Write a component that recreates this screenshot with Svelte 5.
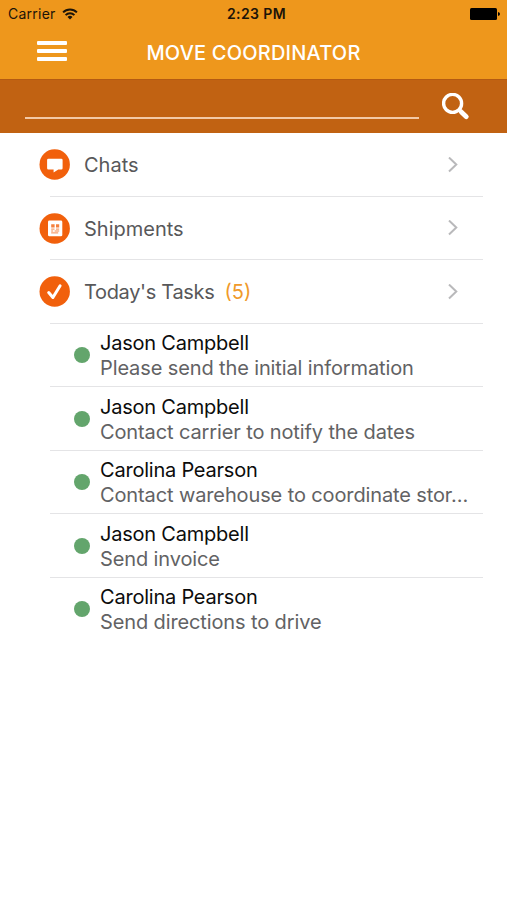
<script lang="ts">
  interface Task {
    name: string;
    note: string;
  }

  const menu = [
    { icon: "chat", label: "Chats", count: 0 },
    { icon: "shipment", label: "Shipments", count: 0 },
    { icon: "check", label: "Today's Tasks", count: 5 },
  ];

  const tasks: Task[] = [
    { name: "Jason Campbell", note: "Please send the initial information" },
    { name: "Jason Campbell", note: "Contact carrier to notify the dates" },
    { name: "Carolina Pearson", note: "Contact warehouse to coordinate stor…" },
    { name: "Jason Campbell", note: "Send invoice" },
    { name: "Carolina Pearson", note: "Send directions to drive" },
  ];

  let query = $state("");
</script>

<div class="screen">
  <header class="top">
    <div class="status">
      <span class="carrier">
        Carrier
        <svg width="16" height="12" viewBox="0 0 16 12" fill="none" stroke="#1c1408" stroke-width="2">
          <path d="M1.1 4.4a9.8 9.8 0 0 1 13.8 0M3.6 7.1a6.2 6.2 0 0 1 8.8 0" />
          <path d="M8 11.6 5.5 8.9a3.6 3.6 0 0 1 5 0z" fill="#1c1408" stroke="none" />
        </svg>
      </span>
      <span class="time">2:23 PM</span>
      <svg class="battery" width="30" height="12" viewBox="0 0 30 12">
        <rect width="27" height="12" rx="1.5" />
        <path d="M28 4q2 .5 2 2t-2 2z" />
      </svg>
    </div>
    <div class="nav">
      <button class="burger" aria-label="Menu">
        <span></span>
        <span></span>
        <span></span>
      </button>
      <h1>MOVE COORDINATOR</h1>
    </div>
  </header>

  <div class="search">
    <input type="text" aria-label="Search" bind:value={query} />
    <svg width="28" height="28" viewBox="0 0 28 28" fill="none" stroke="#fff">
      <circle cx="10.6" cy="10.4" r="9" stroke-width="3.4" />
      <path d="m17 16.8 2 2" stroke-width="3.6" />
      <path d="m19.3 18.9 5 4.8" stroke-width="4.8" stroke-linecap="round" />
    </svg>
  </div>

  <ul class="menu">
    {#each menu as item}
      <li>
        <svg class="icon" width="31" height="31" viewBox="0 0 31 31">
          <circle cx="15.7" cy="15.5" r="15.2" fill="#f1600c" />
          {#if item.icon === "chat"}
            <path
              d="M9.4 9.8h12.9q1.3 0 1.3 1.3v8.2q0 1.3-1.3 1.3h-3L14.6 23.4v-2.8H9.4q-1.3 0-1.3-1.3v-8.2q0-1.3 1.3-1.3z"
              fill="#fff"
            />
          {:else if item.icon === "shipment"}
            <rect x="9" y="7.5" width="14.3" height="15.8" rx="1.4" fill="#fff" />
            <path d="M12.2 11.2h3.4v3.2h-3.4zM17 11.2h3.2v3.2H17z" fill="#f1600c" opacity=".8" />
            <path
              d="M12.2 16.1h3.3M17 16.1h3.2M12.2 18h2M15.6 18h4.6M12.2 19.9h7"
              fill="none"
              stroke="#f1600c"
              opacity=".75"
            />
          {:else}
            <path
              d="m9.7 16.6 4.2 4.9 7.2-11.7"
              fill="none"
              stroke="#fff"
              stroke-width="3"
              stroke-linecap="round"
              stroke-linejoin="round"
            />
          {/if}
        </svg>
        <span class="label" class:label--counted={item.count > 0}>{item.label}</span>
        {#if item.count}
          <span class="count">({item.count})</span>
        {/if}
        <svg class="chevron" width="10" height="16" viewBox="0 0 10 16">
          <path d="m1 .5 7.3 7L1 14.5" fill="none" stroke="#b9b9bb" stroke-width="2" />
        </svg>
      </li>
    {/each}
  </ul>

  <ul class="tasks">
    {#each tasks as task}
      <li>
        <span class="dot"></span>
        <div class="text">
          <div class="name">{task.name}</div>
          <div class="note">{task.note}</div>
        </div>
      </li>
    {/each}
  </ul>
</div>

<style>
  :global(body) {
    margin: 0;
    background: #fff;
  }

  .screen {
    width: 507px;
    height: 900px;
    overflow: hidden;
    background: #fff;
    font-family: Inter, "Liberation Sans", sans-serif;
  }

  .top {
    height: 79px;
    background: #ee971c;
  }

  .status {
    display: grid;
    grid-template-columns: 1fr auto 1fr;
    align-items: center;
    height: 27px;
    padding: 0 7px 0 8px;
    font-size: 14px;
    color: #1c1408;
  }

  .carrier {
    display: flex;
    align-items: center;
    gap: 6px;
    letter-spacing: 0.25px;
  }

  .time {
    padding-left: 5px;
    font-weight: 600;
    letter-spacing: 0.4px;
  }

  .battery {
    justify-self: end;
  }

  .nav {
    display: grid;
    grid-template-columns: 110px 1fr 110px;
    align-items: center;
    height: 50px;
  }

  .burger {
    display: flex;
    flex-direction: column;
    gap: 4px;
    width: 30px;
    margin: 0 0 3px 37px;
    padding: 0;
    border: none;
    background: none;
  }

  .burger span {
    height: 4px;
    border-radius: 1px;
    background: #fff;
  }

  h1 {
    margin: 0;
    padding-top: 1px;
    font-size: 20px;
    font-weight: 500;
    line-height: 24px;
    letter-spacing: 0.2px;
    text-align: center;
    white-space: nowrap;
    color: #fff;
  }

  .search {
    display: flex;
    align-items: flex-start;
    box-sizing: border-box;
    height: 53.5px;
    padding: 13px 37px 0 25px;
    border-top: 1px solid #b45a12;
    background: #c16212;
  }

  .search input {
    box-sizing: border-box;
    width: 394px;
    height: 26px;
    margin-right: 23px;
    padding: 0;
    border: none;
    border-bottom: 2px solid #f3c9a6;
    background: transparent;
    font: inherit;
    color: #fff;
    outline: none;
  }

  .search svg {
    flex: none;
  }

  ul {
    margin: 0;
    padding: 0;
    list-style: none;
  }

  .menu {
    padding-top: 0.5px;
  }

  li {
    display: flex;
    align-items: center;
    box-sizing: border-box;
    height: 63.5px;
    background: linear-gradient(#e4e4e6, #e4e4e6) 50px 100% / 433px 1px no-repeat;
  }

  .menu li {
    padding: 0 49px 0 39px;
    font-size: 20px;
    color: #58585a;
  }

  .label {
    margin-left: 14px;
    padding-top: 1px;
  }

  .label--counted {
    letter-spacing: -0.33px;
  }

  .count {
    margin-left: 10px;
    padding-top: 1px;
    color: #f09a2a;
  }

  .chevron {
    margin-left: auto;
  }

  .tasks li {
    padding: 0 35px 0 74px;
  }

  .tasks li:last-child {
    background: none;
  }

  .dot {
    flex: none;
    width: 16px;
    height: 16px;
    margin-right: 10px;
    border-radius: 50%;
    background: #63a56c;
  }

  .text {
    min-width: 0;
    padding-top: 2px;
    font-size: 20px;
    line-height: 25px;
    white-space: nowrap;
  }

  .name {
    letter-spacing: -0.22px;
    color: #0c0c0c;
  }

  .note {
    letter-spacing: -0.12px;
    color: #626264;
  }
</style>
